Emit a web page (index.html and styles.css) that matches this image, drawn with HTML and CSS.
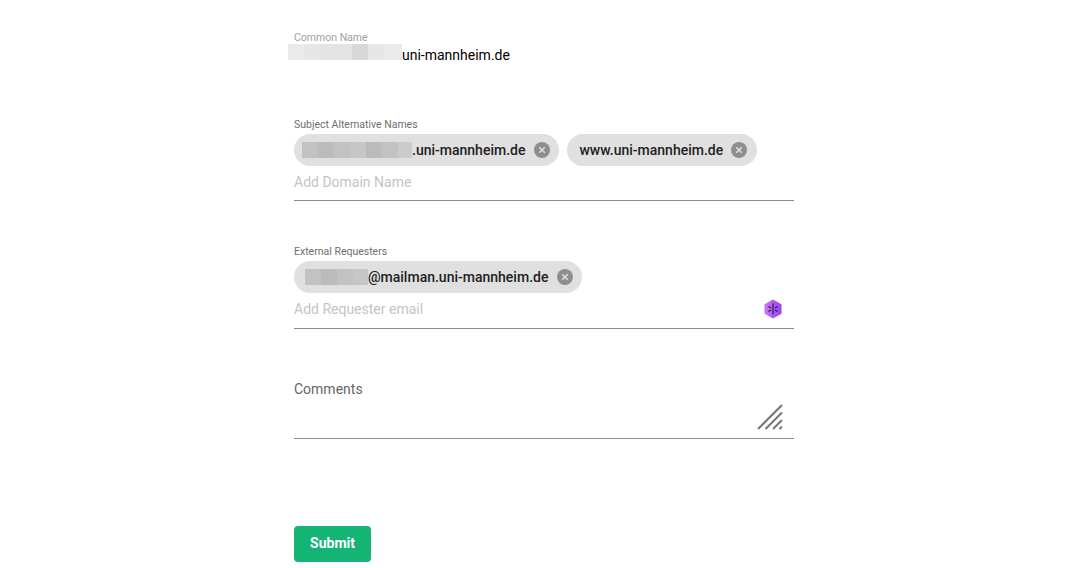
FILE: index.html
```html
<!DOCTYPE html>
<html lang="en">
<head>
<meta charset="utf-8">
<title>Certificate request</title>
<link rel="stylesheet" href="styles.css">
</head>
<body>
<form class="form">
  <section class="field field-cn">
    <div class="label">Common Name</div>
    <div class="cn-value">
      <span class="redact redact-cn"><i class="c1"></i><i class="c2"></i><i class="c3"></i><i class="c3"></i><i class="c5"></i><i class="c2"></i><i class="c1 last"></i></span><span class="cn-text">uni-mannheim.de</span>
    </div>
  </section>

  <section class="field field-san">
    <div class="label label-dark">Subject Alternative Names</div>
    <div class="chips">
      <span class="chip chip-a"><span class="redact"><i class="d1"></i><i class="d2"></i><i class="d1"></i><i class="d3"></i><i class="d2"></i><i class="d1"></i><i class="d4 last"></i></span><span class="chip-text">.uni-mannheim.de</span>
        <svg class="chip-x" viewBox="0 0 16 16"><circle cx="8" cy="8" r="8" fill="#8e8e8e"/><path d="M5.2 5.2l5.6 5.6M10.8 5.2l-5.6 5.6" stroke="#e0e0e0" stroke-width="1.5"/></svg></span>
      <span class="chip"><span class="chip-text">www.uni-mannheim.de</span>
        <svg class="chip-x" viewBox="0 0 16 16"><circle cx="8" cy="8" r="8" fill="#8e8e8e"/><path d="M5.2 5.2l5.6 5.6M10.8 5.2l-5.6 5.6" stroke="#e0e0e0" stroke-width="1.5"/></svg></span>
    </div>
    <div class="input-row"><span class="placeholder">Add Domain Name</span></div>
  </section>

  <section class="field field-ext">
    <div class="label label-dark">External Requesters</div>
    <div class="chips">
      <span class="chip chip-b"><span class="redact"><i class="d1"></i><i class="d2"></i><i class="d1"></i><i class="d3 last"></i></span><span class="chip-text">@mailman.uni-mannheim.de</span>
        <svg class="chip-x" viewBox="0 0 16 16"><circle cx="8" cy="8" r="8" fill="#8e8e8e"/><path d="M5.2 5.2l5.6 5.6M10.8 5.2l-5.6 5.6" stroke="#e0e0e0" stroke-width="1.5"/></svg></span>
    </div>
    <div class="input-row input-row-tall"><span class="placeholder">Add Requester email</span>
      <svg class="hex" viewBox="0 0 20 20">
        <defs><linearGradient id="hexfill" x1="0" y1="0" x2="1" y2="0"><stop offset="0" stop-color="#c678f7"/><stop offset="1" stop-color="#9a3ff0"/></linearGradient></defs>
        <path d="M10 .5l8.5 4.8v9.4L10 19.5 1.500 14.700V5.300z" fill="url(#hexfill)"/>
        <path d="M10 4.500v11M5.500 7.500l2.500 1.500M14.500 7.500L12 9M5.500 12.500L8 11M14.500 12.500L12 11" stroke="#2c1a52" stroke-width="1.200" fill="none"/>
      </svg>
    </div>
  </section>

  <section class="field field-comments">
    <div class="comments-label">Comments</div>
    <div class="textarea-row">
      <svg class="grip" viewBox="0 0 26 26"><path d="M1 25L25 1M8.500 25L25 8.500M16 25l9-9M22.500 25l2.500-2.500" stroke="#757575" stroke-width="2" fill="none"/></svg>
    </div>
  </section>

  <button class="submit" type="button">Submit</button>
</form>
</body>
</html>
```

FILE: styles.css
```css
* { box-sizing: border-box; }
html, body { margin: 0; padding: 0; background: #fff; }
body { height: 568px; overflow: hidden; font-family: Roboto, "Liberation Sans", sans-serif; color: #212121; }
.form { width: 500px; margin-left: 294px; padding-top: 31px; display: flex; flex-direction: column; }
.label { font-size: 10.5px; line-height: 13px; color: #a0a0a0; }
.label-dark { color: #6e6e6e; }
.cn-value { display: flex; align-items: flex-start; height: 16px; font-size: 14px; line-height: 16px; color: #000; margin-left: -6px; }
.cn-text { padding-top: 3px; }
.redact { display: inline-flex; height: 16px; flex: none; }
.redact i { display: block; width: 16px; height: 16px; }
.redact i.last { width: 14px; }
.redact-cn i.last { width: 18px; }
.chip-b .redact i.last { width: 15px; }
.c1 { background: #eaeaea; }
.c2 { background: #e6e6e6; }
.c3 { background: #e3e3e3; }
.c5 { background: #d8d8d8; }
.d1 { background: #c2c2c2; }
.d2 { background: #bbb; }
.d3 { background: #c6c6c6; }
.d4 { background: #cbcbcb; }
.field-cn { height: 64px; }
.field-san { margin-top: 23px; height: 110px; }
.field-ext { margin-top: 17px; }
.chips { display: flex; gap: 8px; margin-top: 3px; }
.chip { display: inline-flex; align-items: center; height: 32px; padding: 0 10px 0 12px; border-radius: 16px; background: #e0e0e0; font-size: 14px; font-weight: 500; color: #212121; }
.chip-x { width: 16px; height: 16px; margin-left: 8px; flex: none; }
.chip-a { padding: 0 9px 0 8px; }
.chip-a .chip-x { margin-left: 9px; }
.chip-b { padding: 0 9px 0 11px; }
.chip-b .chip-x { margin-left: 9px; }
.input-row { height: 35px; display: flex; align-items: center; justify-content: space-between; border-bottom: 1px solid #8c8c8c; padding: 0 11px 3px 0; }
.input-row-tall { height: 36px; padding-bottom: 4px; }
.placeholder { font-size: 14px; color: #c4c4c4; }
.hex { width: 20px; height: 20px; flex: none; }
.comments-label { font-size: 14px; line-height: 16px; color: #666; }
.field-comments { margin-top: 52px; }
.textarea-row { height: 42px; display: flex; justify-content: flex-end; align-items: flex-end; border-bottom: 1px solid #8c8c8c; padding: 0 11px 8px 0; }
.grip { width: 26px; height: 26px; flex: none; }
.submit { align-self: flex-start; width: 77px; height: 36px; margin-top: 87px; border: 0; border-radius: 4px; background: #14b474; color: #fff; font: 700 14px Roboto, "Liberation Sans", sans-serif; padding: 0 0 2px; }
```
